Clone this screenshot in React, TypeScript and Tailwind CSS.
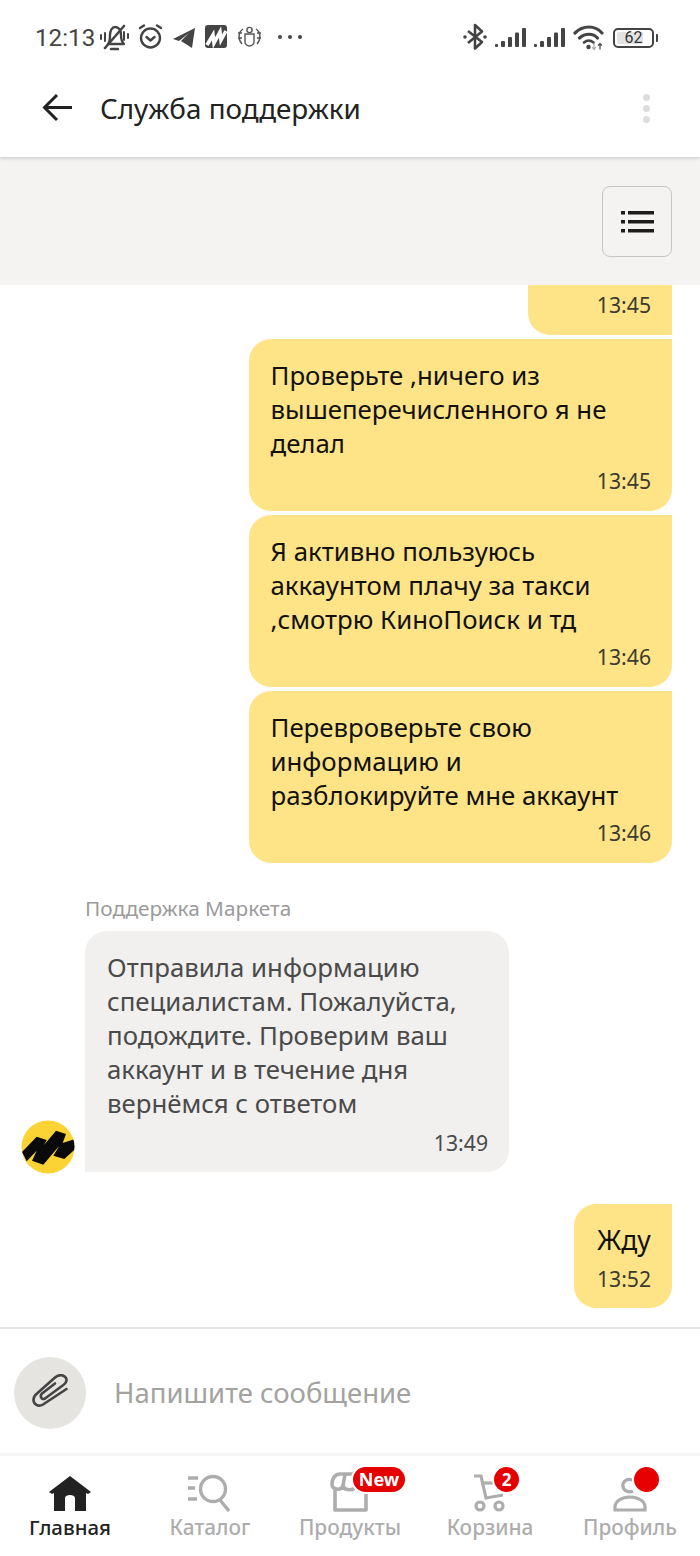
import React from "react";

const font = "font-['Noto_Sans',sans-serif]";

function Bubble({ lines, time }: { lines: string[]; time: string }) {
  return (
    <div className="w-[423px] self-end bg-[#fee486] rounded-tl-[22px] rounded-bl-[22px] rounded-br-[22px] pl-[21.5px] pr-[21px] pt-[20px] pb-[16px]">
      {lines.map((l) => (
        <div key={l} className="text-[25.8px] leading-[34px] text-[#111] whitespace-nowrap -translate-y-[1px]">{l}</div>
      ))}
      <div className="text-right text-[21.2px] leading-[28px] mt-[6px] text-[#3c3a30]">{time}</div>
    </div>
  );
}

function StatusIcons() {
  return (
    <svg width="210" height="30" viewBox="0 0 210 30" fill="none">
      {/* muted bell */}
      <g stroke="#444" strokeLinecap="round" strokeLinejoin="round">
        <path d="M8 12 v8 M4 14 v4 M27 11 v8 M31 13 v4" strokeWidth="2" />
        <path d="M11 23 c2-2 2-5 2-9 c0-4 2-8 5-8 c4 0 6 4 6 8 c0 4 1 7 3 9 z" strokeWidth="2.4" />
        <path d="M8 27 L27 5" strokeWidth="2.6" />
        <path d="M14 28 h7" strokeWidth="2.4" />
      </g>
      {/* alarm */}
      <g stroke="#444" strokeWidth="2.4" strokeLinecap="round" strokeLinejoin="round">
        <circle cx="53.5" cy="17" r="9.5" />
        <path d="M49.5 16 l4 3.5 l4 -3.5" />
        <path d="M43 7 l4 -2.5 M64 7 l-4 -2.5" />
      </g>
      {/* telegram */}
      <path d="M76 18 L98 7 L95 27 L84 20 L92 12 L82 20 Z" fill="#444" />
      {/* market */}
      <rect x="108" y="4" width="22" height="23" rx="3" fill="#444" />
      <path d="M110 24 L116 14 L117 22 L123 11 L124 19 L129 10" stroke="#fff" strokeWidth="3.6" fill="none" />
      {/* emblem */}
      <g stroke="#555" strokeWidth="1.4">
        <path d="M148 13 h9 v8 c0 2 -2 4 -4.5 4 c-2.5 0 -4.5 -2 -4.5 -4 z" />
        <circle cx="152.5" cy="9" r="2.6" />
        <path d="M146 8 c-5 3 -5 11 -1 15 M159 8 c5 3 5 11 1 15 M141 12 h4 M141 17 h4 M160 12 h4 M160 17 h4" />
      </g>
      {/* dots */}
      <circle cx="183" cy="16" r="2" fill="#444" />
      <circle cx="193" cy="16" r="2" fill="#444" />
      <circle cx="203" cy="16" r="2" fill="#444" />
    </svg>
  );
}

function RightIcons() {
  return (
    <svg width="141" height="30" viewBox="0 0 141 30" fill="none">
      <path d="M5 8 L19 19 L12 25.5 V2 L19 8.5 L5 20" stroke="#444" strokeWidth="2.6" strokeLinejoin="round" />
      <circle cx="2" cy="14" r="1.8" fill="#444" />
      <circle cx="22" cy="14" r="1.8" fill="#444" />
      {[0, 39].map((o) => (
        <g key={o} fill="#444">
          <rect x={32 + o} y="21" width="3" height="3" rx="1" />
          <rect x={38 + o} y="18" width="4" height="6" rx="1" />
          <rect x={45 + o} y="14" width="4" height="10" rx="1" />
          <rect x={52 + o} y="9.5" width="4" height="14.5" rx="1" />
          <rect x={59 + o} y="5" width="4" height="19" rx="1" />
        </g>
      ))}
      <g stroke="#444" strokeWidth="3.2" fill="none" strokeLinecap="round">
        <path d="M112 10 C120 2 132 2 139 10" />
        <path d="M116.5 15 C122 10 130 10 134.5 15" />
        <path d="M121 19.5 C124 17 127.5 17 130.5 19.5" strokeWidth="2.6" />
      </g>
      <circle cx="125.5" cy="24" r="2.2" fill="#444" />
      <path d="M131 20 v6 M129 24 l2 2.5 l2 -2.5" stroke="#aaa" strokeWidth="1.2" />
      <path d="M137 26.5 v-6 M135 22.5 l2 -2 l2 2" stroke="#444" strokeWidth="1.2" />
    </svg>
  );
}

function Battery() {
  return (
    <div className="flex items-center ml-[9px]">
      <div className="relative w-[41px] h-[20px] border-2 border-[#444] rounded-[5px] p-[2px]">
        <div className="h-full w-[26px] bg-[#e3e3e3] rounded-l-[2px]" />
        <div className="absolute inset-0 flex items-center justify-center text-[16px] leading-none text-[#333] font-['Roboto',sans-serif]">62</div>
      </div>
      <div className="w-[2px] h-[8px] bg-[#444] ml-[2px] rounded-r-[1px]" />
    </div>
  );
}

function Tab({ label, active, children }: { label: string; active?: boolean; children: React.ReactNode }) {
  return (
    <div className="flex flex-col items-center w-[140px]">
      <div className="relative h-[40px] w-[100px] flex justify-center items-end">{children}</div>
      <div className={`leading-[26px] mt-[2px] font-medium ${active ? "text-[20.4px] text-[#222]" : "text-[20.8px] text-[#adadad]"}`}>{label}</div>
    </div>
  );
}

export default function App() {
  return (
    <div className={`${font} w-[700px] h-[1556px] bg-white flex flex-col overflow-hidden`}>
      <div className="relative z-10 h-[157px] bg-white shadow-[0_1px_4px_rgba(0,0,0,0.2)] flex flex-col shrink-0">
        <div className="h-[74px] pl-[35px] pr-[42px] pt-[21px] flex items-start justify-between">
          <div className="flex items-start">
            <span className="w-[62px] text-[24.2px] leading-[34px] text-[#444] font-['Roboto',sans-serif]">12:13</span>
            <StatusIcons />
          </div>
          <div className="flex items-center h-[34px]">
            <RightIcons />
            <Battery />
          </div>
        </div>
        <div className="flex-1 flex items-center pl-[42px] pr-[50px] pb-[15px]">
          <svg width="30" height="30" viewBox="0 0 30 30" fill="none" stroke="#222" strokeWidth="3">
            <path d="M30 14.5 H3 M15 2 L2.5 14.5 L15 27" />
          </svg>
          <div className="ml-[28px] text-[27.8px] leading-[34px] text-[#222]">Служба поддержки</div>
          <div className="ml-auto flex flex-col gap-[4px]">
            <div className="w-[7px] h-[7px] rounded-full bg-[#ddd]" />
            <div className="w-[7px] h-[7px] rounded-full bg-[#ddd]" />
            <div className="w-[7px] h-[7px] rounded-full bg-[#ddd]" />
          </div>
        </div>
      </div>

      <div className="h-[128px] bg-[#f4f3f2] shrink-0 flex justify-end items-start pt-[29px] pr-[28px]">
        <div className="w-[70px] h-[71px] border border-[#c6c6c6] rounded-[8px] flex items-center justify-center">
          <svg width="33" height="24" viewBox="0 0 33 24" fill="#1c1c1c">
            <rect x="0" y="1" width="4" height="3.5" />
            <rect x="0" y="10" width="4" height="3.5" />
            <rect x="0" y="19" width="4" height="3.5" />
            <rect x="7" y="1" width="26" height="3.5" />
            <rect x="7" y="10" width="26" height="3.5" />
            <rect x="7" y="19" width="26" height="3.5" />
          </svg>
        </div>
      </div>

      <div className="h-[1042px] shrink-0 flex flex-col pl-[21px] pr-[28px] overflow-hidden">
        <div className="self-end w-[144px] h-[50px] shrink-0 bg-[#fee486] rounded-bl-[22px] pr-[21px] pt-[6px] text-right text-[21.2px] leading-[28px] text-[#3c3a30]">13:45</div>
        <div className="flex flex-col gap-[4px] mt-[4px]">
          <Bubble lines={["Проверьте ,ничего из", "вышеперечисленного я не", "делал"]} time="13:45" />
          <Bubble lines={["Я активно пользуюсь", "аккаунтом плачу за такси", ",смотрю КиноПоиск и тд"]} time="13:46" />
          <Bubble lines={["Перевроверьте свою", "информацию и", "разблокируйте мне аккаунт"]} time="13:46" />
        </div>

        <div className="ml-[64px] mt-[31px] text-[20.8px] leading-[28px] text-[#9b9b9b]">Поддержка Маркета</div>
        <div className="flex items-end mt-[9px]">
          <svg width="54" height="54" viewBox="0 0 54 54" className="mr-[10px] mb-[-2px] shrink-0">
            <defs>
              <clipPath id="ymc">
                <circle cx="27" cy="27" r="26.5" />
              </clipPath>
            </defs>
            <circle cx="27" cy="27" r="26.5" fill="#fbd335" />
            <path
              clipPath="url(#ymc)"
              d="M1 32 L15.7 16.7 L25.7 20 L23 25 L35 10.7 L45 14 L41.7 23 L54.3 19 L54.3 29 L43.3 39 L32.3 35.7 L38.3 25.7 L22.3 44.7 L11 40.7 L15.7 30.7 L5.7 41.3 Z"
              fill="#0a0a0a"
            />
          </svg>
          <div className="w-[424px] h-[241px] bg-[#f1f0ef] rounded-tl-[22px] rounded-tr-[22px] rounded-br-[22px] pl-[22px] pr-[21px] pt-[20px]">
            {["Отправила информацию", "специалистам. Пожалуйста,", "подождите. Проверим ваш", "аккаунт и в течение дня", "вернёмся с ответом"].map((l) => (
              <div key={l} className="text-[25.8px] leading-[34px] text-[#4a4a4a] whitespace-nowrap -translate-y-[1px]">{l}</div>
            ))}
            <div className="text-right text-[21.2px] leading-[28px] mt-[8px] text-[#4a4a4a]">13:49</div>
          </div>
        </div>

        <div className="self-end mt-[32px] w-[98px] h-[104px] bg-[#fee486] rounded-tl-[22px] rounded-bl-[22px] rounded-br-[22px] flex flex-col items-center pt-[19px] pl-[2px]">
          <div className="text-[26.4px] leading-[34px] text-[#111]">Жду</div>
          <div className="text-[21.2px] leading-[28px] mt-[8px] text-[#3c3a30]">13:52</div>
        </div>
      </div>

      <div className="h-[126px] shrink-0 border-t-2 border-[#e4e4e4] flex items-center pl-[14px] pt-[3px]">
        <div className="w-[72px] h-[72px] rounded-full bg-[#e5e4e1] flex items-center justify-center">
          <svg width="38" height="38" viewBox="0 0 38 38" fill="none" stroke="#444" strokeWidth="2.6" strokeLinecap="round" strokeLinejoin="round">
            <path d="M35.5 15 L12 30.5 C7 33.5 2.5 30 2.5 26 C2.5 23 4 21 6 19.5 L24 3.5 C28 0 33 0.5 35 4 C36.5 7 34 10 31 12 L14 24.5 C10.5 26.5 8.5 22 11 19.5 L24 9.5" />
          </svg>
        </div>
        <div className="ml-[28px] text-[27.5px] leading-[34px] text-[#a3a29f]">Напишите сообщение</div>
      </div>

      <div className="flex-1 border-t-[3px] border-[#f6f6f6] flex items-start justify-between pt-[16px]">
        <Tab label="Главная" active>
          <svg width="44" height="36" viewBox="0 0 44 36" fill="#222">
            <path d="M22 0 L43 16 L40 18 L38 17 V35 H27 V22 C27 18 17 18 17 22 V35 H6 V17 L4 18 L1 16 Z" />
          </svg>
        </Tab>
        <Tab label="Каталог">
          <svg width="44" height="38" viewBox="0 0 44 38" fill="none" stroke="#adadad" strokeWidth="3.4">
            <path d="M0 4 H10 M0 14 H7 M0 25 H9" />
            <circle cx="25" cy="15" r="12.5" />
            <path d="M32 26 L41 37" />
          </svg>
        </Tab>
        <Tab label="Продукты">
          <svg width="40" height="40" viewBox="0 0 40 40" fill="none" stroke="#adadad" strokeWidth="3.6" strokeLinejoin="round">
            <path d="M5 18 V38 H36 V18" />
            <path d="M10 2 H32 L37 12 C37 18 28 19 26 14 C24 19 15 19 13 14 C11 19 2 18 2 12 C2 8 4 2 10 2 Z" />
            <path d="M13 14 L15 2 M26 14 L25 2" />
          </svg>
          <div className="absolute left-[53px] top-[-5px] w-[52px] h-[25px] rounded-full bg-[#e60000] text-white text-[18px] leading-[25px] font-bold text-center ring-2 ring-white">New</div>
        </Tab>
        <Tab label="Корзина">
          <svg width="34" height="38" viewBox="0 0 34 38" fill="none" stroke="#adadad" strokeWidth="3.2">
            <path d="M1 2 H8 L13 24 L30 21" />
            <path d="M8 9 H22" />
            <circle cx="7" cy="32" r="4" />
            <circle cx="26" cy="32" r="4" />
          </svg>
          <div className="absolute left-[54px] top-[-5px] w-[25px] h-[25px] rounded-full bg-[#e60000] text-white text-[17px] leading-[25px] font-bold text-center ring-2 ring-white">2</div>
        </Tab>
        <Tab label="Профиль">
          <svg width="34" height="36" viewBox="0 0 34 36" fill="none" stroke="#adadad" strokeWidth="3.2">
            <path d="M21 5 C14 1 9 6 10 11 C11 15 16 17 20 15" />
            <path d="M2 34 H32 V31 C32 25 25 21 17 21 C9 21 2 25 2 31 Z" />
          </svg>
          <div className="absolute left-[54px] top-[-5px] w-[25px] h-[25px] rounded-full bg-[#e60000] ring-2 ring-white" />
        </Tab>
      </div>
    </div>
  );
}
